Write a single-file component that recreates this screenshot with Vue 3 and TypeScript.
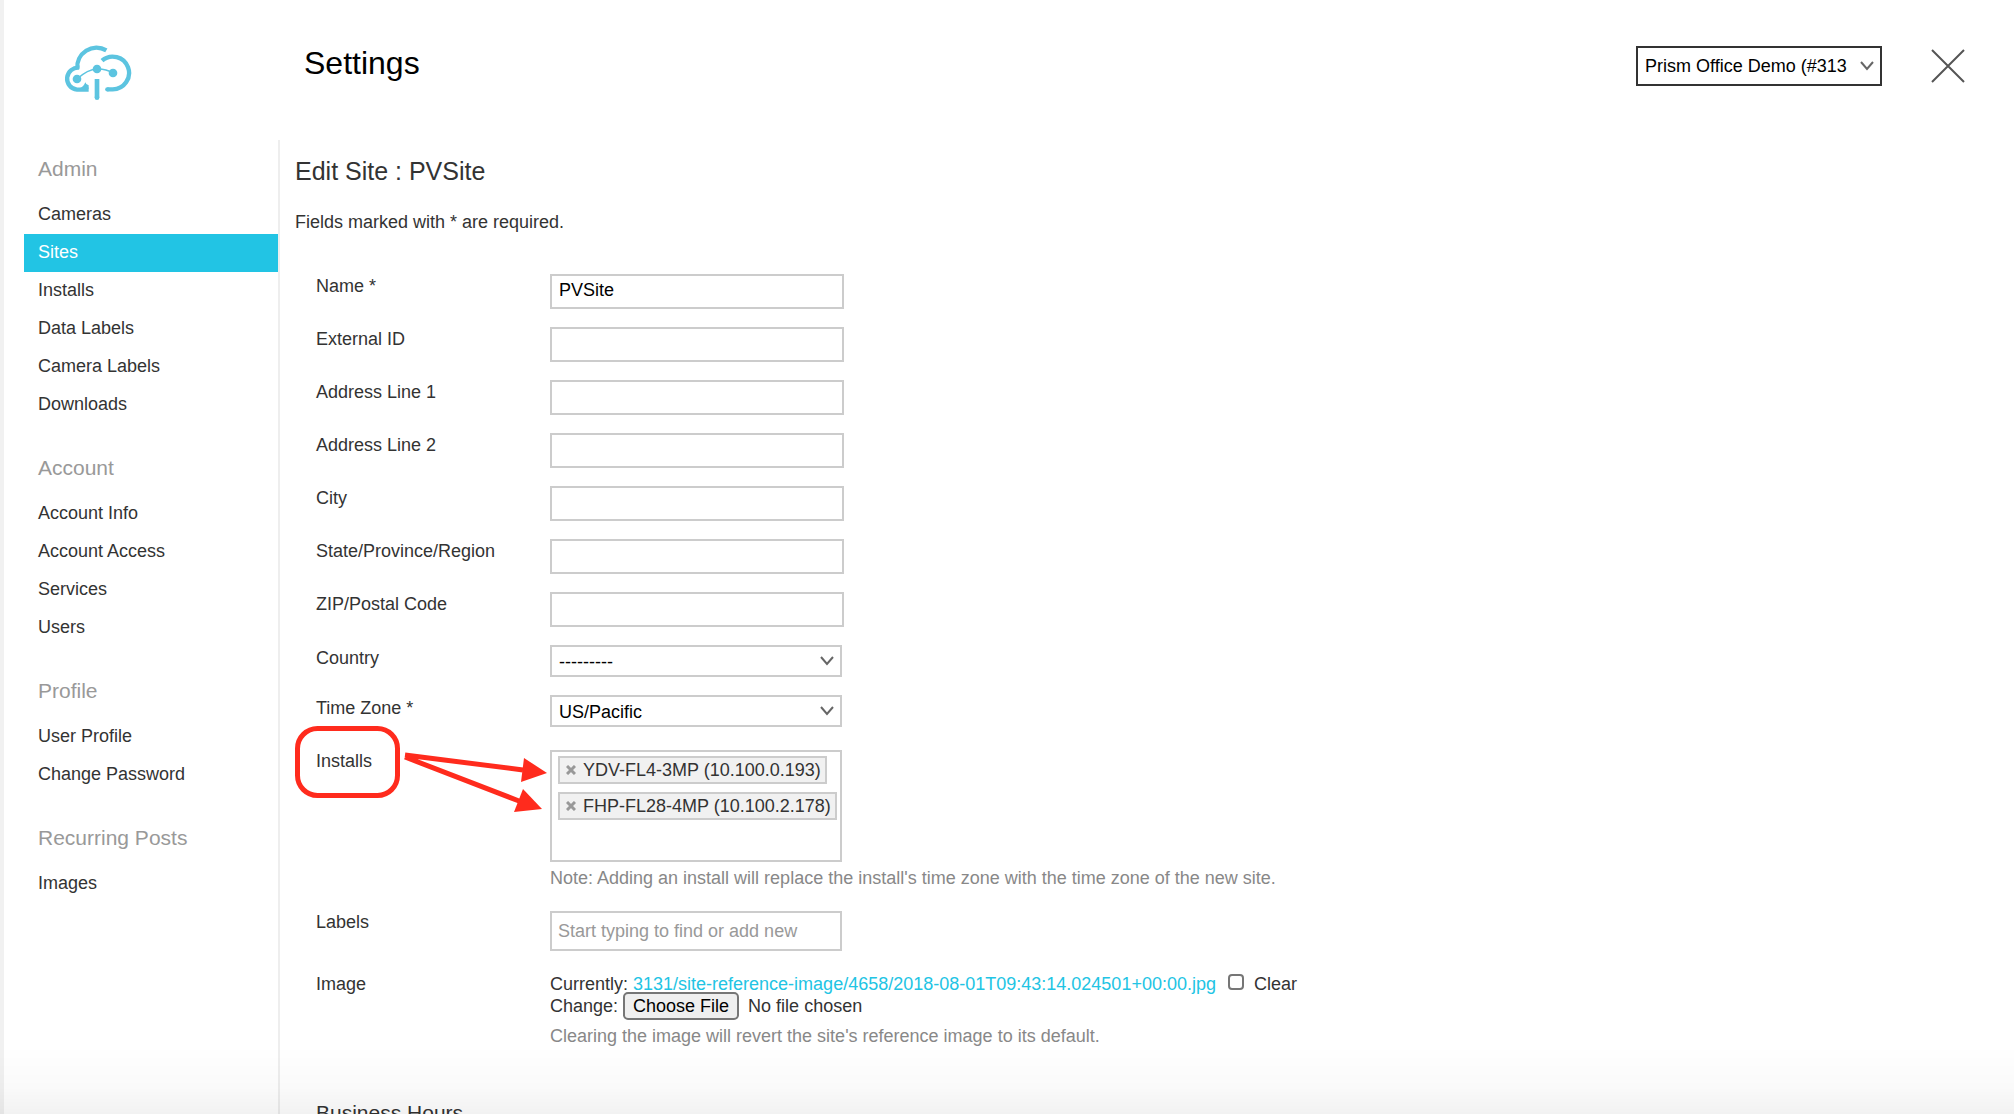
<script setup lang="ts">
import { ref } from 'vue'

interface NavGroup {
  title: string
  items: string[]
}

interface TextField {
  id: string
  label: string
  value: string
}

const navGroups: NavGroup[] = [
  {
    title: 'Admin',
    items: ['Cameras', 'Sites', 'Installs', 'Data Labels', 'Camera Labels', 'Downloads'],
  },
  { title: 'Account', items: ['Account Info', 'Account Access', 'Services', 'Users'] },
  { title: 'Profile', items: ['User Profile', 'Change Password'] },
  { title: 'Recurring Posts', items: ['Images'] },
]
const activeItem = ref('Sites')

const textFields = ref<TextField[]>([
  { id: 'name', label: 'Name *', value: 'PVSite' },
  { id: 'external-id', label: 'External ID', value: '' },
  { id: 'address-1', label: 'Address Line 1', value: '' },
  { id: 'address-2', label: 'Address Line 2', value: '' },
  { id: 'city', label: 'City', value: '' },
  { id: 'region', label: 'State/Province/Region', value: '' },
  { id: 'postal-code', label: 'ZIP/Postal Code', value: '' },
])

const installs = ref(['YDV-FL4-3MP (10.100.0.193)', 'FHP-FL28-4MP (10.100.2.178)'])
const labelQuery = ref('')
const clearImage = ref(false)

function removeInstall(name: string) {
  installs.value = installs.value.filter((item) => item !== name)
}
</script>

<template>
  <div class="page">
    <header class="header">
      <div class="brand">
        <svg class="logo" viewBox="190 135 210 168" aria-label="Home">
          <g fill="none" stroke="#5cc4e0" stroke-width="13">
            <path d="M320 151A58 58 0 0 0 233 207" />
            <path d="M239 203A33 33 0 0 0 232 269H267" />
            <path d="M307 182A49 49 0 1 1 339 268H323" />
            <path d="M323 268H324" stroke-linecap="round" />
            <path d="M292 237V293" stroke-width="14" />
            <path d="M292 292V293" stroke-width="14" stroke-linecap="round" />
            <path d="M232 237Q264 208 292 207Q318 206 340 219" stroke-width="4" />
          </g>
          <g fill="#5cc4e0">
            <circle cx="232" cy="237" r="13" />
            <circle cx="292" cy="207" r="13" />
            <circle cx="340" cy="219" r="13" />
            <path d="M240 265Q252 260 257 247L260 252L267 256V266H240Z" />
          </g>
        </svg>
      </div>
      <h1 class="title">Settings</h1>
      <div class="select-wrap account">
        <select aria-label="Account">
          <option>Prism Office Demo (#313</option>
        </select>
        <svg class="chevron" viewBox="0 0 14 10"><path d="M1 1L7 8L13 1" /></svg>
      </div>
      <button class="close" type="button" aria-label="Close">
        <svg viewBox="0 0 34 34"><path d="M1 1L33 33M33 1L1 33" /></svg>
      </button>
    </header>

    <div class="body">
      <nav class="sidebar">
        <section v-for="group in navGroups" :key="group.title" class="group">
          <h2>{{ group.title }}</h2>
          <a
            v-for="item in group.items"
            :key="item"
            href="#"
            :class="{ active: item === activeItem }"
            @click.prevent="activeItem = item"
            >{{ item }}</a
          >
        </section>
      </nav>

      <main class="main">
        <h2 class="heading">Edit Site : PVSite</h2>
        <p class="hint">Fields marked with * are required.</p>

        <form class="form" @submit.prevent>
          <div v-for="field in textFields" :key="field.id" class="row">
            <label :for="field.id">{{ field.label }}</label>
            <input :id="field.id" v-model="field.value" class="text" type="text" />
          </div>

          <div class="row choice">
            <label for="country">Country</label>
            <div class="select-wrap">
              <select id="country">
                <option>---------</option>
              </select>
              <svg class="chevron" viewBox="0 0 14 10"><path d="M1 1L7 8L13 1" /></svg>
            </div>
          </div>

          <div class="row choice">
            <label for="timezone">Time Zone *</label>
            <div class="select-wrap">
              <select id="timezone">
                <option>US/Pacific</option>
              </select>
              <svg class="chevron" viewBox="0 0 14 10"><path d="M1 1L7 8L13 1" /></svg>
            </div>
          </div>

          <div class="row wide installs">
            <span id="installs-label" class="label">Installs</span>
            <div class="field">
              <ul class="tags" aria-labelledby="installs-label">
                <li v-for="name in installs" :key="name">
                  <button type="button" :aria-label="'Remove ' + name" @click="removeInstall(name)">
                    <svg viewBox="0 0 10 10"><path d="M1 1L9 9M9 1L1 9" /></svg>
                  </button>
                  {{ name }}
                </li>
              </ul>
              <p class="note">
                Note: Adding an install will replace the install's time zone with the time zone of
                the new site.
              </p>
            </div>
            <svg class="callout" viewBox="0 0 262 94" aria-hidden="true">
              <g fill="none" stroke="#ff2b1d" stroke-width="5">
                <rect x="7.5" y="7.5" width="100" height="67" rx="20" />
                <path d="M115 34L233 49M115 36L229 80" />
              </g>
              <g fill="#ff2b1d">
                <path d="M234 37L257 52L231 61Z" />
                <path d="M233 68L252 88L224 91Z" />
              </g>
            </svg>
          </div>

          <div class="row wide">
            <label for="labels">Labels</label>
            <input
              id="labels"
              v-model="labelQuery"
              class="text finder"
              type="text"
              placeholder="Start typing to find or add new"
            />
          </div>

          <div class="row wide">
            <label for="image">Image</label>
            <div class="field">
              <div class="line">
                <span>Currently:</span>
                <a href="#" @click.prevent
                  >3131/site-reference-image/4658/2018-08-01T09:43:14.024501+00:00.jpg</a
                >
                <input id="clear" v-model="clearImage" type="checkbox" />
                <label for="clear">Clear</label>
              </div>
              <div class="line">
                <span>Change:</span>
                <input id="image" type="file" />
              </div>
              <p class="note image-note">
                Clearing the image will revert the site's reference image to its default.
              </p>
            </div>
          </div>

          <h3 class="subheading">Business Hours</h3>
        </form>
      </main>
    </div>
    <div class="fade"></div>
  </div>
</template>

<style>
body {
  margin: 0;
  background: #fff;
}
</style>

<style scoped>
.page {
  box-sizing: border-box;
  height: 100vh;
  display: flex;
  flex-direction: column;
  overflow: hidden;
  border-left: 4px solid #f1f1f1;
  color: #333;
  font: 18px/22px 'Liberation Sans', Arial, sans-serif;
}

h1,
h2,
h3,
p,
ul {
  margin: 0;
  padding: 0;
  font-weight: 400;
}

input,
select,
button {
  box-sizing: border-box;
  margin: 0;
  font: inherit;
  color: #000;
}

.header {
  flex: none;
  box-sizing: border-box;
  height: 140px;
  display: flex;
  align-items: flex-start;
  padding: 45px 49px 0 0;
}

.brand {
  width: 276px;
}

.logo {
  display: block;
  width: 70px;
  height: 56px;
  margin-left: 59px;
}

.title {
  flex: 1;
  padding-left: 24px;
  color: #000;
  font-size: 32px;
  line-height: 36px;
}

.select-wrap {
  position: relative;
  width: 292px;
  height: 32px;
}

.select-wrap select {
  display: block;
  width: 100%;
  height: 100%;
  padding: 2px 30px 0 7px;
  border: 2px solid #ccc;
  border-radius: 0;
  background: #fff;
  appearance: none;
}

.chevron {
  position: absolute;
  top: 50%;
  right: 8px;
  width: 14px;
  height: 10px;
  margin-top: -5px;
  pointer-events: none;
}

.chevron path {
  fill: none;
  stroke: #666;
  stroke-width: 2;
}

.account {
  width: 246px;
  height: 40px;
  margin-top: 1px;
}

.account select {
  padding: 0 24px 0 7px;
  border-color: #333;
}

.close {
  width: 34px;
  height: 34px;
  margin: 4px 0 0 49px;
  padding: 0;
  border: 0;
  background: none;
}

.close svg {
  display: block;
  width: 34px;
  height: 34px;
}

.close path {
  fill: none;
  stroke: #555;
  stroke-width: 2;
}

.body {
  flex: 1;
  min-height: 0;
  display: flex;
}

.sidebar {
  flex: none;
  box-sizing: border-box;
  width: 276px;
  padding: 17px 0 0 20px;
  border-right: 2px solid #eee;
}

.group {
  margin-bottom: 32px;
}

.group h2 {
  margin: 0 0 15px 14px;
  color: #999;
  font-size: 21px;
  line-height: 24px;
}

.group a {
  display: block;
  padding: 0 0 2px 14px;
  color: #333;
  line-height: 36px;
  text-decoration: none;
}

.group a.active {
  background: #22c4e4;
  color: #fff;
}

.main {
  flex: 1;
  min-width: 0;
  padding: 16px 15px 0;
}

.heading {
  font-size: 25px;
  line-height: 30px;
}

.hint {
  margin-top: 25px;
}

.form {
  margin: 41px 0 0 21px;
}

.row {
  display: flex;
  align-items: flex-start;
  margin-bottom: 18px;
}

.row > label,
.row > .label {
  flex: none;
  width: 234px;
  padding-top: 1px;
}

.row.choice > label {
  padding-top: 2px;
}

.row.wide {
  margin-bottom: 22px;
}

.row.wide > label,
.row.wide > .label {
  padding-top: 0;
}

.text {
  width: 294px;
  height: 35px;
  padding: 0 7px 2px;
  border: 2px solid #ccc;
  background: #fff;
}

.finder {
  width: 292px;
  height: 40px;
  padding: 0 6px;
}

.finder::placeholder {
  color: #999;
}

.installs {
  position: relative;
  margin-top: 23px;
}

.tags {
  box-sizing: border-box;
  width: 292px;
  min-height: 112px;
  display: flex;
  flex-direction: column;
  align-items: flex-start;
  gap: 8px;
  padding: 4px 4px 4px 6px;
  border: 2px solid #ccc;
  list-style: none;
}

.tags li {
  box-sizing: border-box;
  height: 28px;
  display: flex;
  align-items: center;
  gap: 7px;
  padding: 0 4px 0 6px;
  border: 2px solid #ccc;
  background: #f1f1f1;
  white-space: nowrap;
}

.tags button {
  width: 10px;
  height: 10px;
  padding: 0;
  border: 0;
  background: none;
}

.tags svg {
  display: block;
  width: 10px;
  height: 10px;
}

.tags path {
  fill: none;
  stroke: #999;
  stroke-width: 3;
}

.note {
  margin-top: 5px;
  color: #888;
}

.callout {
  position: absolute;
  top: -29px;
  left: -26px;
  width: 262px;
  height: 94px;
  pointer-events: none;
}

.line {
  display: flex;
  align-items: center;
  height: 22px;
  gap: 5px;
}

.line a {
  color: #22c4e4;
  text-decoration: none;
}

.line input[type='checkbox'] {
  width: 16px;
  height: 16px;
  margin: 0 5px 4px 7px;
  border: 2px solid #767676;
  border-radius: 4px;
  background: #fff;
  appearance: none;
}

.line input[type='checkbox']:checked {
  background: #767676;
}

.line input[type='file'] {
  height: 28px;
  color: #333;
}

.line input[type='file']::file-selector-button {
  box-sizing: border-box;
  height: 28px;
  margin: 0 9px 0 0;
  padding: 0 8px;
  border: 2px solid #767676;
  border-radius: 5px;
  background: #efefef;
  color: #000;
  font: inherit;
}

.image-note {
  margin-top: 8px;
}

.subheading {
  margin-top: 54px;
  font-size: 21px;
  line-height: 24px;
}

.fade {
  position: fixed;
  right: 0;
  bottom: 0;
  left: 0;
  height: 68px;
  background: linear-gradient(rgba(0, 0, 0, 0), rgba(0, 0, 0, 0.02) 60%, rgba(0, 0, 0, 0.05));
  pointer-events: none;
}
</style>
